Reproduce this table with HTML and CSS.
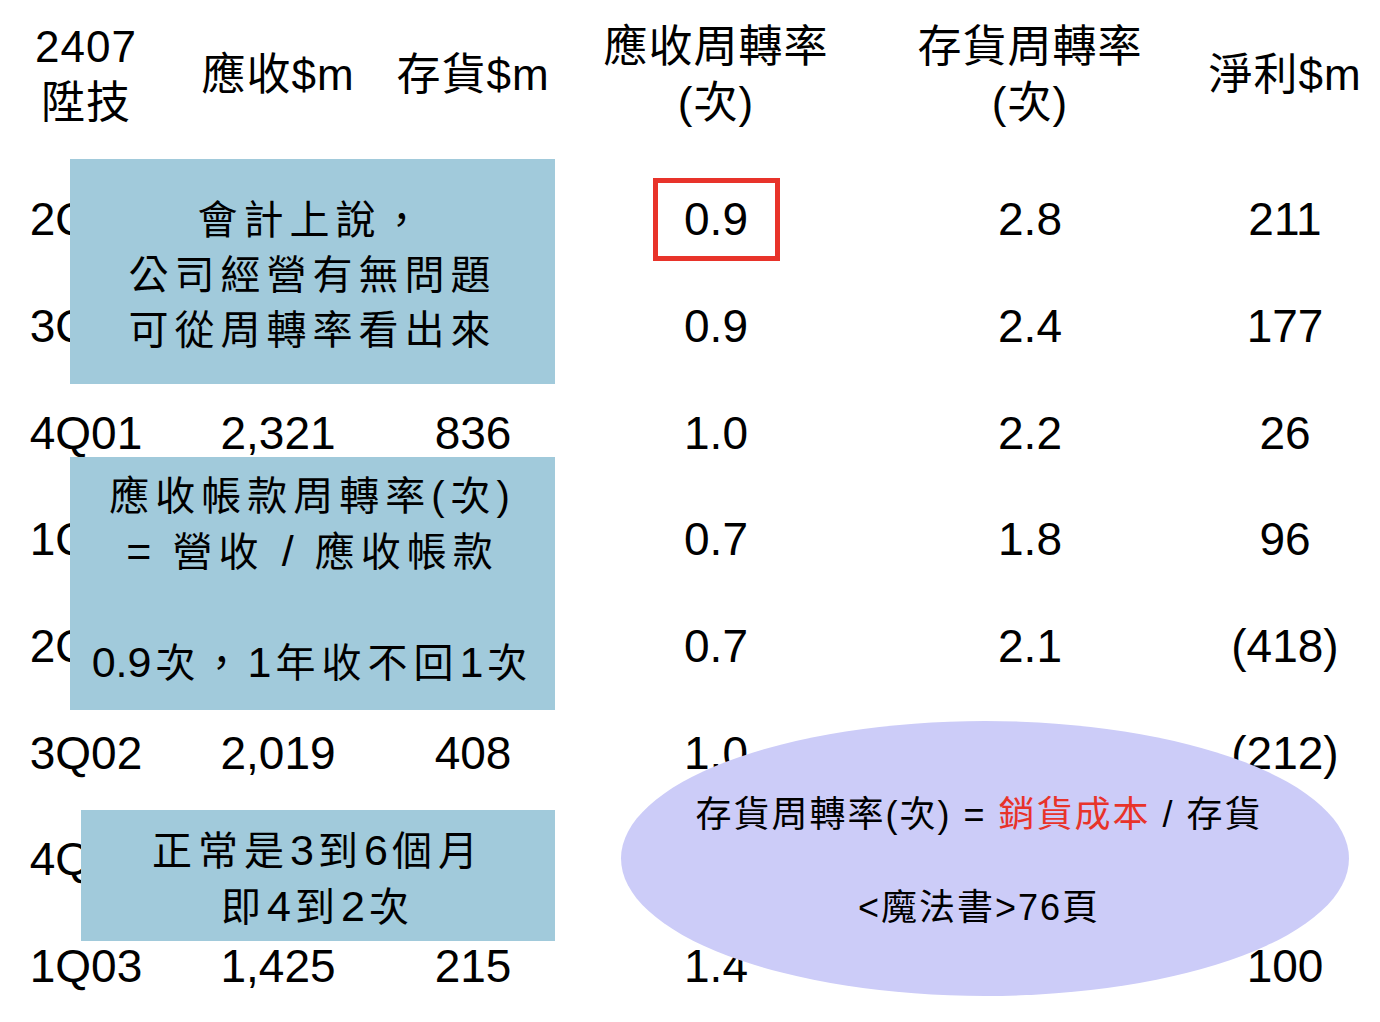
FILE: index.html
```html
<!DOCTYPE html>
<html lang="zh-Hant">
<head>
<meta charset="utf-8">
<title>陞技 周轉率</title>
<link rel="stylesheet" href="styles.css">
</head>
<body>
<div class="slide">
  <div class="table">
    <div class="head">
      <div class="hc">2407<br>陞技</div>
      <div class="hc">應收$m</div>
      <div class="hc">存貨$m</div>
      <div class="hc">應收周轉率<br>(次)</div>
      <div class="hc">存貨周轉率<br>(次)</div>
      <div class="hc">淨利$m</div>
    </div>
    <div class="body">
      <div class="c">2Q01</div><div class="c"></div><div class="c"></div><div class="c"><span class="mark">0.9</span></div><div class="c">2.8</div><div class="c">211</div>
      <div class="c">3Q01</div><div class="c"></div><div class="c"></div><div class="c">0.9</div><div class="c">2.4</div><div class="c">177</div>
      <div class="c">4Q01</div><div class="c">2,321</div><div class="c">836</div><div class="c">1.0</div><div class="c">2.2</div><div class="c">26</div>
      <div class="c">1Q02</div><div class="c"></div><div class="c"></div><div class="c">0.7</div><div class="c">1.8</div><div class="c">96</div>
      <div class="c">2Q02</div><div class="c"></div><div class="c"></div><div class="c">0.7</div><div class="c">2.1</div><div class="c">(418)</div>
      <div class="c">3Q02</div><div class="c">2,019</div><div class="c">408</div><div class="c">1.0</div><div class="c"></div><div class="c">(212)</div>
      <div class="c">4Q02</div><div class="c"></div><div class="c"></div><div class="c"></div><div class="c"></div><div class="c"></div>
      <div class="c">1Q03</div><div class="c">1,425</div><div class="c">215</div><div class="c">1.4</div><div class="c"></div><div class="c">100</div>
    </div>
  </div>

  <div class="note note1">
    <div>會計上說，</div>
    <div>公司經營有無問題</div>
    <div>可從周轉率看出來</div>
  </div>
  <div class="note note2">
    <div>應收帳款周轉率(次)</div>
    <div><span class="n">=</span> 營收 <span class="n">/</span> 應收帳款</div>
    <div class="blank">&nbsp;</div>
    <div><span class="n">0.9</span>次，<span class="n">1</span>年收不回<span class="n">1</span>次</div>
  </div>
  <div class="note note3">
    <div>正常是<span class="n">3</span>到<span class="n">6</span>個月</div>
    <div>即<span class="n">4</span>到<span class="n">2</span>次</div>
  </div>
  <div class="oval">
    <div>存貨周轉率(次) = <span class="red">銷貨成本</span> / 存貨</div>
    <div>&lt;魔法書&gt;76頁</div>
  </div>
</div>
</body>
</html>
```

FILE: styles.css
```css
html, body {
  margin: 0;
  padding: 0;
  background: #ffffff;
}

body {
  font-family: "Liberation Sans", "Noto Sans CJK TC", sans-serif;
  color: #000000;
}

.slide {
  position: relative;
  width: 1380px;
  height: 1022px;
  overflow: hidden;
}

.head,
.body {
  display: grid;
  grid-template-columns: 172px 212px 178px 308px 320px 190px;
}

.head {
  height: 148px;
  align-items: center;
  margin-bottom: 18px;
}

.hc {
  text-align: center;
  font-size: 44px;
  line-height: 56px;
  letter-spacing: 1px;
  padding-top: 2px;
}

.body {
  grid-auto-rows: 106.7px;
  align-items: center;
}

.c {
  text-align: center;
  font-size: 46px;
  line-height: 1;
}

.mark {
  display: inline-flex;
  align-items: center;
  justify-content: center;
  width: 127px;
  height: 83px;
  box-sizing: border-box;
  border: 5px solid #e8332a;
}

.note {
  position: absolute;
  background: #a1cadb;
  display: flex;
  flex-direction: column;
  justify-content: center;
  align-items: center;
  font-size: 40px;
  line-height: 55px;
  letter-spacing: 6px;
  text-align: center;
  white-space: nowrap;
}

.note .n {
  font-size: 43px;
  letter-spacing: 0;
  margin-right: 4px;
}

.note1 {
  left: 70px;
  top: 159px;
  width: 485px;
  height: 225px;
  padding-top: 8px;
  box-sizing: border-box;
}

.note2 {
  left: 70px;
  top: 457px;
  width: 485px;
  height: 253px;
  padding-bottom: 8px;
  box-sizing: border-box;
}

.note3 {
  left: 81px;
  top: 810px;
  width: 474px;
  height: 131px;
  padding-top: 6px;
  box-sizing: border-box;
}

.oval {
  position: absolute;
  left: 621px;
  top: 721px;
  width: 728px;
  height: 275px;
  border-radius: 50%;
  background: #ccccf8;
  display: flex;
  flex-direction: column;
  justify-content: center;
  align-items: center;
  gap: 47px;
  font-size: 36px;
  line-height: 46px;
  letter-spacing: 2px;
  white-space: nowrap;
  padding: 6px 12px 0 0;
  box-sizing: border-box;
}

.red {
  color: #e8332a;
}
```
